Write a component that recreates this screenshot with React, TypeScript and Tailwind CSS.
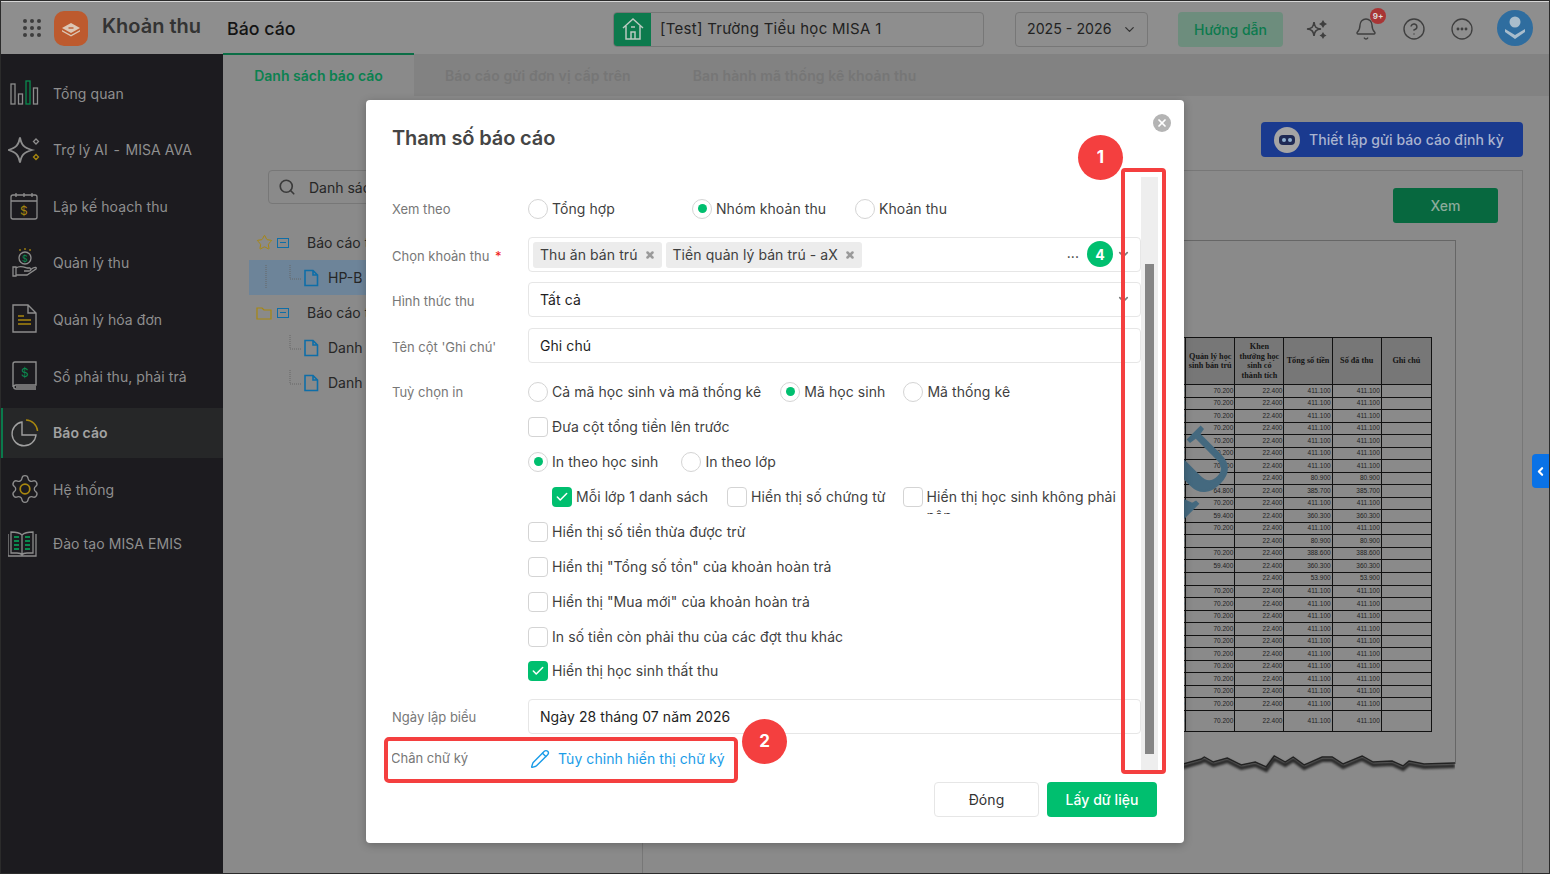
import React from "react";
import { Bell, ChevronDown, ChevronLeft, CircleHelp, Search, X, Star, Pencil, Check } from "lucide-react";

const G = "#8d8d8d";
const A = "#a8870f";
const N = "#0a8a4f";

const iconProps = { width: 34, height: 34, viewBox: "0 0 34 34", fill: "none", stroke: G, strokeWidth: 1.3 };

function IOverview() {
  return (
    <svg {...iconProps}>
      <rect x="3" y="8" width="4" height="20" />
      <rect x="10.5" y="18" width="4" height="10" />
      <rect x="18" y="5" width="4" height="23" stroke={N} />
      <rect x="25.5" y="12" width="4" height="16" />
    </svg>
  );
}
function IAi() {
  return (
    <svg {...iconProps}>
      <path d="M12 4.5 C13.5 12 15.5 14.5 24 17 C15.5 19.5 13.5 22 12 29.5 C10.5 22 8.5 19.5 0.5 17 C8.5 14.5 10.5 12 12 4.5Z" strokeWidth="1.8" />
      <path d="M28 6 l2.5 2.5 -2.5 2.5 -2.5 -2.5Z" />
      <path d="M28 21.5 l2.5 2.5 -2.5 2.5 -2.5 -2.5Z" stroke={A} />
    </svg>
  );
}
function IPlan() {
  return (
    <svg {...iconProps}>
      <rect x="3" y="6" width="26" height="24" rx="2" />
      <path d="M3 12 H29 M8 4 V8 M16 4 V8 M24 4 V8" />
      <text x="16" y="26" fontSize="12" textAnchor="middle" fill={A} stroke="none" fontFamily="Inter">$</text>
    </svg>
  );
}
function ICollect() {
  return (
    <svg {...iconProps}>
      <circle cx="17" cy="12" r="6" />
      <path d="M17 2 V4 M12 3 V5 M22 3 V5" stroke={A} />
      <text x="17" y="15.5" fontSize="9" textAnchor="middle" fill={N} stroke="none" fontFamily="Inter">$</text>
      <path d="M5 21 H8 V30 H5Z M8 22 C12 19 16 21 19 22 H22 C24 23 23 25 21 25 H16 M8 29 H19 L28 23 C29 21 27 21 25 22 L22 24" />
    </svg>
  );
}
function IInvoice() {
  return (
    <svg {...iconProps}>
      <path d="M5 3 H20 L28 11 V30 H5Z M20 3 V11 H28" strokeWidth="1.4" />
      <path d="M10 14 H16 M10 18 H23 M10 22 H23" stroke={A} strokeWidth="1.6" />
    </svg>
  );
}
function IBook() {
  return (
    <svg {...iconProps}>
      <path d="M7 3 H28 V26 H8 C5 26 5 30 8 30 H28 M5 28 V5 C5 4 6 3 7 3 M8 28 H28" strokeWidth="1.4" />
      <text x="17" y="18" fontSize="12" textAnchor="middle" fill={N} stroke="none" fontFamily="Inter">$</text>
    </svg>
  );
}
function IReport() {
  return (
    <svg {...iconProps}>
      <path d="M14 6 A12 12 0 1 0 28 19 H14Z" strokeWidth="1.4" fill="none" stroke="#a0a0a0" />
      <path d="M18 4 A12 12 0 0 1 29.5 15" stroke={A} strokeWidth="1.5" />
    </svg>
  );
}
function IGear() {
  return (
    <svg width="32" height="32" viewBox="0 0 24 24" fill="none" stroke={G} strokeWidth="1">
      <path d="M9.671 4.136a2.34 2.34 0 0 1 4.659 0 2.34 2.34 0 0 0 3.319 1.915 2.34 2.34 0 0 1 2.33 4.033 2.34 2.34 0 0 0 0 3.831 2.34 2.34 0 0 1-2.33 4.033 2.34 2.34 0 0 0-3.319 1.915 2.34 2.34 0 0 1-4.659 0 2.34 2.34 0 0 0-3.32-1.915 2.34 2.34 0 0 1-2.33-4.033 2.34 2.34 0 0 0 0-3.831A2.34 2.34 0 0 1 6.35 6.051a2.34 2.34 0 0 0 3.319-1.915" />
      <circle cx="12" cy="12" r="3.6" stroke={A} strokeWidth="1.3" />
    </svg>
  );
}
function ITraining() {
  return (
    <svg {...iconProps}>
      <path d="M0 7 V29 H28 V7 M14 8 C11 5 6 5 3 5 V26 H9 C11 26 13 26 14 28 C15 26 17 26 19 26 H25 V5 C22 5 17 5 14 8 V28" />
      <path d="M6 10 H11 M6 14 H11 M6 18 H11 M6 22 H11 M17 10 H22 M17 14 H22 M17 18 H22 M17 22 H22" stroke={N} strokeWidth="2" />
    </svg>
  );
}

const menu: { id: string; label: React.ReactNode; icon: React.ReactNode; active?: boolean; cls?: string }[] = [
  { id: "a", label: "Tổng quan", icon: <IOverview /> },
  { id: "b", label: <>Trợ lý AI <span className="mx-[1.5px]">-</span> MISA AVA</>, icon: <IAi /> },
  { id: "c", label: "Lập kế hoạch thu", icon: <IPlan /> },
  { id: "d", label: "Quản lý thu", icon: <ICollect /> },
  { id: "e", label: "Quản lý hóa đơn", icon: <IInvoice /> },
  { id: "f", label: "Sổ phải thu, phải trả", icon: <IBook />, cls: "pt-[1px]" },
  { id: "g", label: "Báo cáo", icon: <IReport />, active: true },
  { id: "h", label: "Hệ thống", icon: <IGear /> },
  { id: "i", label: "Đào tạo MISA EMIS", icon: <ITraining />, cls: "-mt-[2px]" },
];

function Radio({ checked, label, className = "" }: { checked?: boolean; label: string; className?: string }) {
  return (
    <div className={"flex items-center gap-[4px] shrink-0 " + className}>
      <span className="flex h-[20px] w-[20px] items-center justify-center rounded-full border border-[#d4d4d4] bg-white">
        {checked && <span className="h-[9px] w-[9px] rounded-full bg-[#00bf6f]" />}
      </span>
      <span className="text-[14px] text-[#3f3f3f] whitespace-nowrap">{label}</span>
    </div>
  );
}

function Box({ checked }: { checked?: boolean }) {
  return checked ? (
    <span className="flex h-[20px] w-[20px] shrink-0 items-center justify-center rounded-[4px] bg-[#00bf6f]">
      <Check size={14} color="#fff" strokeWidth={2.6} />
    </span>
  ) : (
    <span className="h-[20px] w-[20px] shrink-0 rounded-[4px] border border-[#d4d4d4] bg-white" />
  );
}

function CheckRow({ checked, label, className = "h-[35px]" }: { checked?: boolean; label: string; className?: string }) {
  return (
    <div className={"ml-[136px] flex items-center gap-[4px] " + className}>
      <Box checked={checked} />
      <span className="text-[14px] text-[#3f3f3f] whitespace-nowrap">{label}</span>
    </div>
  );
}

function Label({ children, className = "" }: { children: React.ReactNode; className?: string }) {
  return <div className={"w-[136px] shrink-0 text-[13px] tracking-normal text-[#777] " + className}>{children}</div>;
}

function Field({ label, value, chevron, labelClass = "pt-[5px]" }: { label: string; value: string; chevron?: boolean; labelClass?: string }) {
  return (
    <div className="flex items-center">
      <Label className={labelClass}>{label}</Label>
      <div className="flex h-[35px] flex-1 items-center rounded-[4px] border border-[#e6e6e6] pl-[11px] pr-[9px] text-[14px] text-[#1e1e1e]">
        <span>{value}</span>
        {chevron && <ChevronDown size={15} color="#7c7c7c" strokeWidth={2.6} className="ml-auto" />}
      </div>
    </div>
  );
}

function Chip({ label }: { label: string }) {
  return (
    <span className="flex h-[26px] items-center gap-[7px] rounded-[3px] bg-[#ececec] px-[7px] text-[14px] text-[#3f3f3f] whitespace-nowrap">
      {label}
      <X size={10} color="#9a9a9a" strokeWidth={6} />
    </span>
  );
}

const rows: [string, string, string][] = [
  ["70.200", "411.100", "411.100"],
  ["70.200", "411.100", "411.100"],
  ["70.200", "411.100", "411.100"],
  ["70.200", "411.100", "411.100"],
  ["70.200", "411.100", "411.100"],
  ["70.200", "411.100", "411.100"],
  ["70.200", "411.100", "411.100"],
  ["", "80.900", "80.900"],
  ["64.800", "385.700", "385.700"],
  ["70.200", "411.100", "411.100"],
  ["59.400", "360.300", "360.300"],
  ["70.200", "411.100", "411.100"],
  ["", "80.900", "80.900"],
  ["70.200", "388.600", "388.600"],
  ["59.400", "360.300", "360.300"],
  ["", "53.900", "53.900"],
  ["70.200", "411.100", "411.100"],
  ["70.200", "411.100", "411.100"],
  ["70.200", "411.100", "411.100"],
  ["70.200", "411.100", "411.100"],
  ["70.200", "411.100", "411.100"],
  ["70.200", "411.100", "411.100"],
  ["70.200", "411.100", "411.100"],
  ["70.200", "411.100", "411.100"],
  ["70.200", "411.100", "411.100"],
  ["70.200", "411.100", "411.100"],
  ["70.200", "411.100", "411.100"],
];

function FileIcon() {
  return (
    <svg width="16" height="18" viewBox="0 0 16 18" fill="none" stroke="#0e6ea8" strokeWidth="1.6">
      <path d="M2 1.5 H10 L14.5 6 V16.5 H2Z M10 1.5 V6 H14.5" />
    </svg>
  );
}

function Connector({ tall }: { tall?: boolean }) {
  return (
    <svg width="14" height="30" viewBox="0 0 14 30" fill="none" stroke="#666" strokeDasharray="1 1" className="shrink-0">
      <path d={tall ? "M1 2 V26" : "M1 2 V16 H13"} />
    </svg>
  );
}

const TORN = "M0 10 L541 10 L559 5 L562 3 L571 8 L585 4 L599 11 L613 8 L624 13 L632 2 L643 8 L651 3 L662 11 L680 3 L690 3 L701 10 L720 2 L731 8 L750 7 L761 12 L767 7 L782 10 L813 9";

export default function App() {
  return (
    <div className="relative flex h-[874px] w-[1550px] flex-col overflow-hidden border border-[#2b2b2b] bg-[#8a8a8a] font-['Inter',sans-serif]">
      <div className="h-px shrink-0 bg-[#d8d8d8]" />
      {/* header */}
      <header className="flex h-[52px] shrink-0 items-center bg-[#8e8e8e] pl-[22px] pr-[16px] pt-[2px] shadow-[0_1px_2px_rgba(0,0,0,0.15)]">
        <div className="-mt-[2px] grid w-[18px] grid-cols-3 gap-[3px]">
          {Array.from({ length: 9 }).map((_, i) => (
            <span key={i} className="h-[4px] w-[4px] rounded-full bg-[#3d3d3d]" />
          ))}
        </div>
        <svg width="34" height="35" viewBox="0 0 34 35" className="-mt-[2px] ml-[13px] shrink-0">
          <rect width="34" height="35" rx="10" fill="#bd5a2e" />
          <path d="M17 12 L26 17 L17 22 L8 17Z" fill="#dcc6b4" />
          <path d="M8 19 L17 24 L26 19 L26 20.5 L17 25.5 L8 20.5Z" fill="#dcc6b4" />
          <path d="M14.5 17 L19.5 17" stroke="#bd5a2e" strokeWidth="1.4" />
        </svg>
        <span className="ml-[14px] -mt-[6px] text-[20px] font-semibold text-[#333]">Khoản thu</span>
        <span className="ml-[26px] text-[17.8px] font-medium text-[#141414]">Báo cáo</span>
        <div className="ml-auto flex h-[35px] w-[371px] items-center overflow-hidden rounded-[4px] border border-[#777]">
          <span className="flex h-full w-[37px] items-center justify-center bg-[#0c7a4d]">
            <svg width="24" height="24" viewBox="0 0 24 24" fill="none" stroke="#b9c9c0" strokeWidth="1.5">
              <path d="M2 11 L12 2 L22 11 M5 9 V22 H19 V9 M10 22 V15 H14 V22 M10 10 H14" />
            </svg>
          </span>
          <span className="ml-[9px] text-[15px] tracking-[0.28px] text-[#222]">[Test] Trường Tiểu học MISA 1</span>
        </div>
        <div className="ml-[31px] flex h-[35px] w-[133px] items-center justify-between rounded-[4px] border border-[#777] pl-[11px] pr-[10px] text-[14.2px] text-[#222]">
          2025 - 2026
          <ChevronDown size={15} color="#333" />
        </div>
        <div className="ml-[30px] flex h-[35px] w-[105px] items-center justify-center rounded-[4px] bg-[#6d8d7d] text-[14px] font-medium text-[#0c7a4d]">
          Hướng dẫn
        </div>
        <div className="ml-[22px] flex items-center gap-[24px]">
          <svg width="24" height="24" viewBox="0 0 24 24" fill="#3f3f3f">
            <path d="M9 5 C9.6 10 11 11.5 16 12 C11 12.6 9.6 14 9 19 C8.4 14 7 12.6 2 12 C7 11.5 8.4 10 9 5Z" fill="none" stroke="#3f3f3f" strokeWidth="1.6" />
            <path d="M18 3 l1.5 2.5 2.5 1.5 -2.5 1.5 -1.5 2.5 -1.5 -2.5 -2.5 -1.5 2.5 -1.5Z" />
            <path d="M18 15 l1.3 2.2 2.2 1.3 -2.2 1.3 -1.3 2.2 -1.3 -2.2 -2.2 -1.3 2.2 -1.3Z" />
          </svg>
          <span className="relative ml-[1px]">
            <Bell size={24} color="#3f3f3f" strokeWidth={1.4} />
            <span className="absolute -right-[8px] -top-[9px] flex h-[16px] w-[16px] items-center justify-center rounded-full bg-[#a83535] text-[8px] font-bold text-[#ddd]">9+</span>
          </span>
          <CircleHelp size={24} color="#3f3f3f" strokeWidth={1.4} />
          <svg width="24" height="24" viewBox="0 0 24 24" fill="none" stroke="#3f3f3f" strokeWidth="1.3">
            <circle cx="12" cy="12" r="10" />
            <circle cx="8" cy="12" r="0.8" fill="#3f3f3f" />
            <circle cx="12" cy="12" r="0.8" fill="#3f3f3f" />
            <circle cx="16" cy="12" r="0.8" fill="#3f3f3f" />
          </svg>
        </div>
        <svg width="36" height="36" viewBox="0 0 36 36" className="-mt-[2px] ml-[23px] shrink-0">
          <circle cx="18" cy="18" r="18" fill="#2f6d9f" />
          <circle cx="18" cy="12" r="5.5" fill="#a9bdcc" />
          <path d="M8 19 L18 25 L28 19 V22 L18 29 L8 22Z" fill="#a9bdcc" />
        </svg>
      </header>

      <div className="flex min-h-0 flex-1">
        {/* sidebar */}
        <aside className="flex w-[222px] shrink-0 flex-col gap-[6.6px] bg-[#1c1b1f] pt-[14px] tracking-[0.07px]">
          {menu.map((m) => (
            <div
              key={m.id}
              className={
                "flex h-[50px] shrink-0 items-center gap-[11px] border-l-2 pl-[5px] text-[14px] " +
                (m.cls ? m.cls + " " : "") +
                (m.active ? "border-[#0a7a4c] bg-[#262728] font-semibold text-[#a2a2a2]" : "border-transparent text-[#8f8f8f]")
              }
            >
              <span className="flex w-[34px] justify-center">{m.icon}</span>
              <span className="whitespace-nowrap">{m.label}</span>
            </div>
          ))}
        </aside>

        {/* main */}
        <main className="flex min-w-0 flex-1 flex-col">
          <nav className="flex h-[42px] shrink-0 items-center bg-[#828282] text-[14px] font-semibold tracking-[0.1px] text-[#767676]">
            <div className="-mt-[1px] flex h-[43px] w-[191px] items-center justify-center border-t-2 border-[#0b6e46] bg-[#8a8a8a] tracking-normal text-[#0b8150]">
              Danh sách báo cáo
            </div>
            <span className="px-[31px]">Báo cáo gửi đơn vị cấp trên</span>
            <span className="px-[31px]">Ban hành mã thống kê khoản thu</span>
          </nav>
          <div className="flex min-h-0 flex-1">
            {/* left tree */}
            <div className="w-[419px] shrink-0 pl-[45px] pt-[74px] text-[14px] text-[#262626]">
              <div className="flex h-[34px] w-[200px] items-center gap-[13px] rounded-[4px] border border-[#777] pl-[9px]">
                <Search size={18} color="#3a3a3a" strokeWidth={2.2} />
                Danh sách báo cáo
              </div>
              <div className="-ml-[19px] mt-[21px]">
                <div className="flex h-[35px] items-center pl-[7px]">
                  <Star size={17} color="#a8870f" strokeWidth={1.4} />
                  <span className="ml-[4px] flex h-[10px] w-[12px] items-center justify-center border border-[#0e6ea8]"><span className="h-px w-[6px] bg-[#0e6ea8]" /></span>
                  <span className="ml-[18px]">Báo cáo thu</span>
                </div>
                <div className="flex h-[35px] items-center bg-[#6d8499] pl-[16px]">
                  <Connector tall />
                  <span className="ml-[10px]"><Connector /></span>
                  <FileIcon />
                  <span className="ml-[9px]">HP-B</span>
                </div>
                <div className="flex h-[35px] items-center pl-[7px]">
                  <svg width="16" height="14" viewBox="0 0 16 14" fill="none" stroke="#a8870f" strokeWidth="1.2"><path d="M1 2 H6 L8 4 H15 V13 H1Z" /></svg>
                  <span className="ml-[5px] flex h-[10px] w-[12px] items-center justify-center border border-[#0e6ea8]"><span className="h-px w-[6px] bg-[#0e6ea8]" /></span>
                  <span className="ml-[18px]">Báo cáo thu</span>
                </div>
                {[0, 1].map((i) => (
                  <div key={i} className="flex h-[35px] items-center pl-[40px]">
                    <Connector />
                    <FileIcon />
                    <span className="ml-[9px]">Danh</span>
                  </div>
                ))}
              </div>
            </div>

            {/* right */}
            <div className="flex min-w-0 flex-1 flex-col pr-[26px]">
              <div className="mt-[26px] flex h-[35px] w-[262px] shrink-0 items-center gap-[9px] self-end rounded-[4px] bg-[#1a3a8f] pl-[13px] text-[14px] font-medium tracking-[0.07px] text-[#aab4cf]">
                <span className="flex h-[26px] w-[26px] items-center justify-center rounded-full bg-[#a5a5a5]">
                  <span className="flex h-[10px] w-[16px] items-center justify-center gap-[2px] rounded-[4px] bg-[#1f2a55]">
                    <span className="h-[4px] w-[4px] rounded-full bg-[#8fb0d0]" />
                    <span className="h-[4px] w-[4px] rounded-full bg-[#8fb0d0]" />
                  </span>
                </span>
                Thiết lập gửi báo cáo định kỳ
              </div>
              <div className="mt-[13px] flex min-h-0 flex-1 flex-col border-l border-r border-t border-[#777] pr-[66px]">
                <div className="flex h-[69px] shrink-0 justify-end pt-[17px]">
                  <div className="-mr-[42px] flex h-[35px] w-[105px] items-center justify-center rounded-[3px] bg-[#07683f] text-[14px] font-medium text-[#8cab9b]">Xem</div>
                </div>
                <div className="relative flex h-[524px] shrink-0 items-start justify-end border-r border-t border-[#666] pr-[23px] pt-[96px]">
                  <table className="h-[395px] w-[295px] table-fixed border-collapse border border-[#111] text-[6.5px] text-[#1e1e1e] font-['Liberation_Sans',sans-serif]">
                    <colgroup>
                      <col className="w-[48px]" />
                      <col className="w-[49px]" />
                      <col className="w-[49px]" />
                      <col className="w-[48px]" />
                      <col className="w-[49px]" />
                      <col className="w-[50px]" />
                    </colgroup>
                    <thead>
                      <tr className="h-[47px] bg-[#777777] font-['Liberation_Serif',serif] text-[8.2px] font-bold leading-[9.5px] text-[#151515]">
                        <th className="border border-[#111]" />
                        <th className="border border-[#111]">Quản lý học<br />sinh bán trú</th>
                        <th className="border border-[#111]">Khen<br />thưởng học<br />sinh có<br />thành tích</th>
                        <th className="border border-[#111]">Tổng số tiền</th>
                        <th className="border border-[#111]">Số đã thu</th>
                        <th className="border border-[#111]">Ghi chú</th>
                      </tr>
                    </thead>
                    <tbody>
                      {rows.map((r, i) => (
                        <tr key={i} className={i === rows.length - 1 ? "h-[21px]" : "h-[12.5px]"}>
                          <td className="border border-[#111] pr-[1px] text-right leading-none">0</td>
                          <td className="border border-[#111] pr-[1px] text-right leading-none">{r[0]}</td>
                          <td className="border border-[#111] pr-[1px] text-right leading-none">22.400</td>
                          <td className="border border-[#111] pr-[1px] text-right leading-none">{r[1]}</td>
                          <td className="border border-[#111] pr-[1px] text-right leading-none">{r[2]}</td>
                          <td className="border border-[#111]" />
                        </tr>
                      ))}
                    </tbody>
                  </table>
                  <span className="absolute bottom-[213px] right-[207px] -rotate-45 font-['Liberation_Serif',serif] text-[80px] font-bold leading-none text-[#44697f] [-webkit-text-stroke:2px_#44697f]">
                    MẪU
                  </span>
                  <svg className="absolute -bottom-[10px] left-0 h-[20px] w-full" viewBox="0 0 813 20" preserveAspectRatio="none" fill="none">
                    <path d={TORN} stroke="#2a2a2a" strokeWidth="4" transform="translate(0 3)" className="blur-[1px]" />
                    <path d={TORN} stroke="#222" strokeWidth="1.4" />
                  </svg>
                </div>
              </div>
            </div>
          </div>
        </main>
      </div>

      {/* side handle */}
      <div className="absolute right-0 top-[453px] flex h-[34px] w-[17px] items-center justify-center rounded-l-[4px] bg-[#0a72e6]">
        <ChevronLeft size={13} color="#fff" strokeWidth={4} />
      </div>

      {/* dialog */}
      <div className="absolute left-[365px] top-[99px] flex h-[743px] w-[818px] flex-col rounded-[4px] bg-white tracking-[0.07px] shadow-[0_2px_8px_rgba(0,0,0,0.25)]">
        <div className="flex h-[77px] shrink-0 justify-between pl-[26px] pr-[13px] pt-[24px]">
          <h1 className="text-[20px] font-semibold leading-[28px] tracking-[-0.12px] text-[#454545]">Tham số báo cáo</h1>
          <span className="-mt-[10px] flex h-[18px] w-[18px] items-center justify-center rounded-full bg-[#b4b4b4]">
            <X size={12} color="#fff" strokeWidth={3.4} />
          </span>
        </div>

        <div className="flex h-[593px] shrink-0 pl-[26px] pr-[26px]">
          <div className="min-w-0 flex-1 overflow-hidden pt-[15px]">
            <div className="flex h-[33px] items-center">
              <Label className="pt-[2px]">Xem theo</Label>
              <Radio label="Tổng hợp" className="w-[164px]" />
              <Radio checked label="Nhóm khoản thu" className="w-[163px]" />
              <Radio label="Khoản thu" />
            </div>
            <div className="mt-[12px] flex items-center">
              <Label className="pt-[5px]">
                Chọn khoản thu <span className="ml-[2px] text-[#f01818]">*</span>
              </Label>
              <div className="flex h-[35px] flex-1 items-center gap-[4px] rounded-[4px] border border-[#e6e6e6] pl-[4px] pr-[9px]">
                <Chip label="Thu ăn bán trú" />
                <Chip label="Tiền quản lý bán trú - aX" />
                <span className="-mt-[4px] ml-auto text-[14px] leading-none text-[#333]">...</span>
                <ChevronDown size={15} color="#7c7c7c" strokeWidth={2.6} className="ml-[33px]" />
              </div>
            </div>
            <div className="mt-[10px]">
              <Field label="Hình thức thu" value="Tất cả" chevron />
            </div>
            <div className="mt-[11px]">
              <Field label="Tên cột 'Ghi chú'" value="Ghi chú" />
            </div>
            <div className="mt-[11px] flex h-[35px] items-center">
              <Label className="pt-[3px]">Tuỳ chọn in</Label>
              <Radio label="Cả mã học sinh và mã thống kê" className="mr-[19px]" />
              <Radio checked label="Mã học sinh" className="mr-[18px]" />
              <Radio label="Mã thống kê" />
            </div>
            <CheckRow label="Đưa cột tổng tiền lên trước" />
            <div className="ml-[136px] flex h-[35px] items-center">
              <Radio checked label="In theo học sinh" className="mr-[23px]" />
              <Radio label="In theo lớp" />
            </div>
            <div className="ml-[160px] flex h-[35px] overflow-hidden">
              <div className="mr-[19px] flex items-center gap-[4px]">
                <Box checked />
                <span className="text-[14px] text-[#3f3f3f] whitespace-nowrap">Mỗi lớp 1 danh sách</span>
              </div>
              <div className="mr-[17px] flex items-center gap-[4px]">
                <Box />
                <span className="text-[14px] text-[#3f3f3f] whitespace-nowrap">Hiển thị số chứng từ</span>
              </div>
              <div className="flex items-start gap-[4px] pt-[8px]">
                <Box />
                <span className="w-[195px] text-[14px] leading-[19px] text-[#3f3f3f]">Hiển thị học sinh không phải nộp</span>
              </div>
            </div>
            <CheckRow label="Hiển thị số tiền thừa được trừ" />
            <CheckRow label='Hiển thị "Tổng số tồn" của khoản hoàn trả' />
            <CheckRow label='Hiển thị "Mua mới" của khoản hoàn trả' />
            <CheckRow label="In số tiền còn phải thu của các đợt thu khác" />
            <CheckRow checked label="Hiển thị học sinh thất thu" className="h-[33px]" />
            <div className="mt-[12px]">
              <Field label="Ngày lập biểu" value="Ngày 28 tháng 07 năm 2026" labelClass="pt-[3px]" />
            </div>
            <div className="mt-[7px] flex h-[35px] items-center">
              <div className="-ml-px w-[137px] shrink-0 text-[13px] tracking-normal text-[#777]">Chân chữ ký</div>
              <Pencil size={20} color="#1a9ce8" strokeWidth={1.7} className="ml-[2px]" />
              <span className="-mt-px ml-[8px] text-[14px] text-[#1a9ce8]">Tùy chỉnh hiển thị chữ ký</span>
            </div>
          </div>
          <div className="w-[17px] shrink-0 bg-[#eeeeee] px-[4px] pt-[87px]">
            <div className="h-[490px] w-[9px] bg-[#858585]" />
          </div>
        </div>

        <div className="mt-[12px] flex justify-end gap-[8px] pr-[27px]">
          <div className="flex h-[35px] w-[105px] items-center justify-center rounded-[4px] border border-[#e6e6e6] text-[14px] text-[#333]">Đóng</div>
          <div className="flex h-[35px] w-[110px] items-center justify-center rounded-[4px] bg-[#00bf6f] text-[14px] font-medium text-white">Lấy dữ liệu</div>
        </div>
      </div>

      {/* annotations */}
      <div className="absolute left-[1120px] top-[167px] h-[606px] w-[45px] rounded-[4px] border-4 border-[#f43f3f]" />
      <div className="absolute left-[383px] top-[736px] h-[46px] w-[354px] rounded-[5px] border-4 border-[#f43f3f]" />
      <div className="absolute left-[1077px] top-[134px] flex h-[45px] w-[45px] items-center justify-center rounded-full bg-[#f43f3f] text-[17px] font-bold text-white">1</div>
      <div className="absolute left-[741px] top-[718px] flex h-[45px] w-[45px] items-center justify-center rounded-full bg-[#f43f3f] text-[17px] font-bold text-white">2</div>
      <div className="absolute left-[1086px] top-[240px] flex h-[26px] w-[26px] items-center justify-center rounded-full bg-[#00bf6f] text-[14px] font-bold text-white">4</div>
    </div>
  );
}
